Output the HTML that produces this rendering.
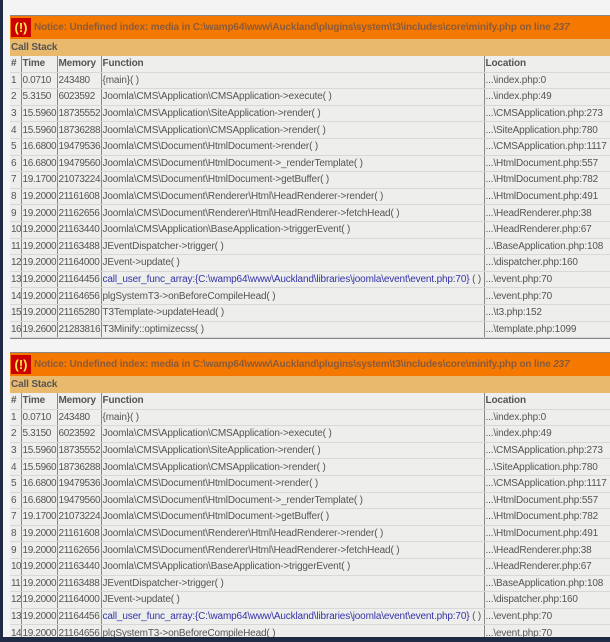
<!DOCTYPE html>
<html style="overflow:hidden;height:642px;"><head><style>
body{margin:0;width:610px;height:642px;overflow:hidden;background:#f4f4f4;position:relative;font-family:"Liberation Sans",sans-serif;}
.lb{position:absolute;left:0;top:0;width:3px;height:642px;background:#1f2a44;}
.bb{position:absolute;left:0;top:637px;width:610px;height:5px;background:#1f2a44;}
.wrap{position:absolute;left:10px;width:600px;background:#fff;}
table{border-collapse:collapse;width:600px;font-size:10px;letter-spacing:-0.15px;color:#555;table-layout:fixed;}
td,th{padding:0 0 0 1px;height:15.6px;line-height:15px;white-space:nowrap;overflow:hidden;text-align:left;border-left:1px solid #888;border-bottom:1px solid #d8d8d8;background:#eeeeec;}
td:nth-child(2),td:nth-child(3){letter-spacing:-0.35px;}
td:first-child{letter-spacing:-0.6px;}
td:first-child,th:first-child{border-left:none;}
.t th{background:#f57900;height:23px;font-weight:bold;color:#8a5a3a;border:none;padding:0;}
.cs th{background:#e9b96e;font-weight:bold;height:17px;border:none;}
.h th{font-weight:bold;}
.ex{display:inline-block;background:#c00;color:#fce94f;font-weight:bold;font-size:13px;width:20px;height:19px;line-height:19px;text-align:center;vertical-align:middle;margin:0 3px 0 1px;letter-spacing:0;}
.bl{color:#3333aa;}
</style></head><body>
<div class="lb"></div>
<div class="wrap" style="top:15px;border-top:1px solid #888;border-bottom:1px solid #888;">
<table>
<colgroup><col style="width:11px"><col style="width:36px"><col style="width:44px"><col style="width:383px"><col style="width:126px"></colgroup>
<tr class="t"><th colspan="5"><span class="ex">(!)</span>Notice: Undefined index: media in C:\wamp64\www\Auckland\plugins\system\t3\includes\core\minify.php on line <i>237</i></th></tr>
<tr class="cs"><th colspan="5">Call Stack</th></tr>
<tr class="h"><th>#</th><th>Time</th><th>Memory</th><th>Function</th><th>Location</th></tr>
<tr><td>1</td><td>0.0710</td><td>243480</td><td>{main}( )</td><td>...\index.php:0</td></tr>
<tr><td>2</td><td>5.3150</td><td>6023592</td><td>Joomla\CMS\Application\CMSApplication-&gt;execute( )</td><td>...\index.php:49</td></tr>
<tr><td>3</td><td>15.5960</td><td>18735552</td><td>Joomla\CMS\Application\SiteApplication-&gt;render( )</td><td>...\CMSApplication.php:273</td></tr>
<tr><td>4</td><td>15.5960</td><td>18736288</td><td>Joomla\CMS\Application\CMSApplication-&gt;render( )</td><td>...\SiteApplication.php:780</td></tr>
<tr><td>5</td><td>16.6800</td><td>19479536</td><td>Joomla\CMS\Document\HtmlDocument-&gt;render( )</td><td>...\CMSApplication.php:1117</td></tr>
<tr><td>6</td><td>16.6800</td><td>19479560</td><td>Joomla\CMS\Document\HtmlDocument-&gt;_renderTemplate( )</td><td>...\HtmlDocument.php:557</td></tr>
<tr><td>7</td><td>19.1700</td><td>21073224</td><td>Joomla\CMS\Document\HtmlDocument-&gt;getBuffer( )</td><td>...\HtmlDocument.php:782</td></tr>
<tr><td>8</td><td>19.2000</td><td>21161608</td><td>Joomla\CMS\Document\Renderer\Html\HeadRenderer-&gt;render( )</td><td>...\HtmlDocument.php:491</td></tr>
<tr><td>9</td><td>19.2000</td><td>21162656</td><td>Joomla\CMS\Document\Renderer\Html\HeadRenderer-&gt;fetchHead( )</td><td>...\HeadRenderer.php:38</td></tr>
<tr><td>10</td><td>19.2000</td><td>21163440</td><td>Joomla\CMS\Application\BaseApplication-&gt;triggerEvent( )</td><td>...\HeadRenderer.php:67</td></tr>
<tr><td>11</td><td>19.2000</td><td>21163488</td><td>JEventDispatcher-&gt;trigger( )</td><td>...\BaseApplication.php:108</td></tr>
<tr><td>12</td><td>19.2000</td><td>21164000</td><td>JEvent-&gt;update( )</td><td>...\dispatcher.php:160</td></tr>
<tr><td>13</td><td>19.2000</td><td>21164456</td><td><span class="bl">call_user_func_array:{C:\wamp64\www\Auckland\libraries\joomla\event\event.php:70}</span> ( )</td><td>...\event.php:70</td></tr>
<tr><td>14</td><td>19.2000</td><td>21164656</td><td>plgSystemT3-&gt;onBeforeCompileHead( )</td><td>...\event.php:70</td></tr>
<tr><td>15</td><td>19.2000</td><td>21165280</td><td>T3Template-&gt;updateHead( )</td><td>...\t3.php:152</td></tr>
<tr><td>16</td><td>19.2600</td><td>21283816</td><td>T3Minify::optimizecss( )</td><td>...\template.php:1099</td></tr>
</table></div>
<div class="wrap" style="top:352px;border-top:1px solid #888;">
<table>
<colgroup><col style="width:11px"><col style="width:36px"><col style="width:44px"><col style="width:383px"><col style="width:126px"></colgroup>
<tr class="t"><th colspan="5"><span class="ex">(!)</span>Notice: Undefined index: media in C:\wamp64\www\Auckland\plugins\system\t3\includes\core\minify.php on line <i>237</i></th></tr>
<tr class="cs"><th colspan="5">Call Stack</th></tr>
<tr class="h"><th>#</th><th>Time</th><th>Memory</th><th>Function</th><th>Location</th></tr>
<tr><td>1</td><td>0.0710</td><td>243480</td><td>{main}( )</td><td>...\index.php:0</td></tr>
<tr><td>2</td><td>5.3150</td><td>6023592</td><td>Joomla\CMS\Application\CMSApplication-&gt;execute( )</td><td>...\index.php:49</td></tr>
<tr><td>3</td><td>15.5960</td><td>18735552</td><td>Joomla\CMS\Application\SiteApplication-&gt;render( )</td><td>...\CMSApplication.php:273</td></tr>
<tr><td>4</td><td>15.5960</td><td>18736288</td><td>Joomla\CMS\Application\CMSApplication-&gt;render( )</td><td>...\SiteApplication.php:780</td></tr>
<tr><td>5</td><td>16.6800</td><td>19479536</td><td>Joomla\CMS\Document\HtmlDocument-&gt;render( )</td><td>...\CMSApplication.php:1117</td></tr>
<tr><td>6</td><td>16.6800</td><td>19479560</td><td>Joomla\CMS\Document\HtmlDocument-&gt;_renderTemplate( )</td><td>...\HtmlDocument.php:557</td></tr>
<tr><td>7</td><td>19.1700</td><td>21073224</td><td>Joomla\CMS\Document\HtmlDocument-&gt;getBuffer( )</td><td>...\HtmlDocument.php:782</td></tr>
<tr><td>8</td><td>19.2000</td><td>21161608</td><td>Joomla\CMS\Document\Renderer\Html\HeadRenderer-&gt;render( )</td><td>...\HtmlDocument.php:491</td></tr>
<tr><td>9</td><td>19.2000</td><td>21162656</td><td>Joomla\CMS\Document\Renderer\Html\HeadRenderer-&gt;fetchHead( )</td><td>...\HeadRenderer.php:38</td></tr>
<tr><td>10</td><td>19.2000</td><td>21163440</td><td>Joomla\CMS\Application\BaseApplication-&gt;triggerEvent( )</td><td>...\HeadRenderer.php:67</td></tr>
<tr><td>11</td><td>19.2000</td><td>21163488</td><td>JEventDispatcher-&gt;trigger( )</td><td>...\BaseApplication.php:108</td></tr>
<tr><td>12</td><td>19.2000</td><td>21164000</td><td>JEvent-&gt;update( )</td><td>...\dispatcher.php:160</td></tr>
<tr><td>13</td><td>19.2000</td><td>21164456</td><td><span class="bl">call_user_func_array:{C:\wamp64\www\Auckland\libraries\joomla\event\event.php:70}</span> ( )</td><td>...\event.php:70</td></tr>
<tr><td>14</td><td>19.2000</td><td>21164656</td><td>plgSystemT3-&gt;onBeforeCompileHead( )</td><td>...\event.php:70</td></tr>
</table></div>
<div class="bb"></div>
</body></html>
